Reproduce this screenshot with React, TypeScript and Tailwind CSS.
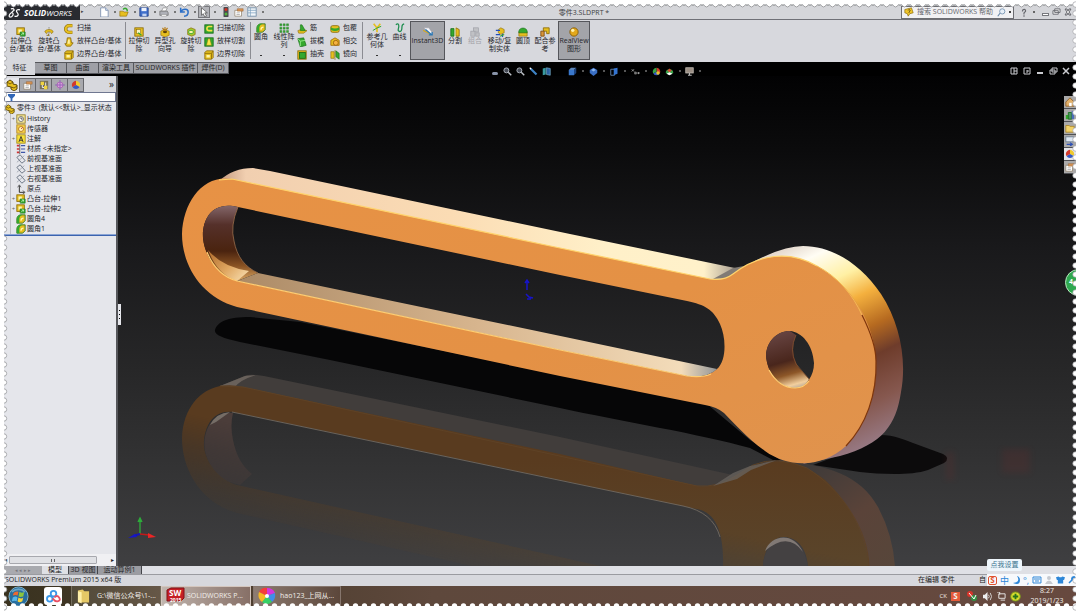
import React from "react";

type IconProps = { name: string; size?: "sm" | "md" | "lg" };

const Y = "#e6bf1f";
const YD = "#8a6a08";
const G = "#35a82e";
const GD = "#156b18";

const glyphs: Record<string, React.ReactNode> = {
  extrude: (<><rect x="1" y="1" width="9" height="8" fill={Y} stroke={YD} /><rect x="3" y="3" width="4" height="4" fill="#fbf4b4" /><path d="M5 6h6v5H5z" fill={G} stroke={GD} strokeWidth=".7" /><path d="M6 10l3-3M7 7h2v2" stroke="#d8ffd0" fill="none" strokeWidth=".8" /></>),
  revolve: (<><path d="M6 0v12" stroke="#888" strokeDasharray="2 1" /><path d="M1 6c0-4 10-4 10 0l-2 2c0-3-6-3-6 0z" fill={Y} stroke={YD} strokeWidth=".7" /><path d="M3 10h3l-1-2" stroke={YD} fill="none" /></>),
  sweep: (<><path d="M10 2H6a4 4 0 000 8h4" fill="none" stroke={YD} strokeWidth="4" /><path d="M10 2H6a4 4 0 000 8h4" fill="none" stroke={Y} strokeWidth="2.6" /></>),
  loft: (<><path d="M4 1h4l1 6h2l-3 4H3L1 8h2z" fill={Y} stroke={YD} /><path d="M5 3h2v5H4z" fill="#fff1a0" /></>),
  boundary: (<><path d="M1 3l2-2h8v8l-2 2H1z" fill={Y} stroke={YD} /><path d="M1 4h8v7M9 4l2-3" stroke={YD} fill="none" /><path d="M3 6h4v3H3z" fill="#fff4a8" /></>),
  cutExtrude: (<><rect x="1" y="1" width="10" height="10" fill={Y} stroke={YD} /><rect x="3" y="3" width="5" height="5" fill="#f8f3c4" stroke={YD} strokeWidth=".7" /><path d="M5 7l4 3" stroke={G} strokeWidth="1.5" /></>),
  hole: (<><path d="M1 5l4-2 6 2v5l-5 2-5-2z" fill={Y} stroke={YD} strokeWidth=".7" /><ellipse cx="6" cy="6" rx="2.5" ry="1.4" fill="#5b4208" /><path d="M6 0v5M3 1l2 3M9 1L7 4" stroke="#b57812" strokeWidth="1.3" /></>),
  cutRevolve: (<><path d="M2 3l4-2 5 2v6l-4 2-5-2z" fill="#a6c82e" stroke={YD} strokeWidth=".8" /><ellipse cx="6" cy="6" rx="3" ry="2" fill="#fff4a8" stroke={G} /></>),
  cutSweep: (<><rect x="1" y="1" width="10" height="10" fill={G} stroke={GD} /><path d="M10 3H6a2 2 0 000 5h4" stroke="#f3e04a" strokeWidth="2" fill="none" /></>),
  cutLoft: (<><rect x="1" y="1" width="10" height="10" fill={G} stroke={GD} /><path d="M5 2h2l2 8H3z" fill="#f8e64b" stroke={YD} strokeWidth=".5" /></>),
  fillet: (<><path d="M1 11V6a5 5 0 015-5h5v7l-3 3z" fill={Y} stroke={GD} strokeWidth=".9" /><path d="M1 6a5 5 0 015-5h2a6 6 0 00-4 6v4H1z" fill={G} /><path d="M6 8a3 3 0 013-3" stroke="#fff6a8" strokeWidth="1.6" fill="none" /></>),
  pattern: (<g fill={G} stroke={GD} strokeWidth=".4"><path d="M1 1h2.4v2.4H1zM5 1h2.4v2.4H5zM9 1h2.4v2.4H9zM1 5h2.4v2.4H1zM5 5h2.4v2.4H5zM9 5h2.4v2.4H9zM1 9h2.4v2.4H1zM5 9h2.4v2.4H5zM9 9h2.4v2.4H9z" /></g>),
  rib: (<><path d="M1 8l5-2 6 2-4 3H2z" fill={Y} stroke={YD} strokeWidth=".7" /><path d="M4 1h2l4 7H4z" fill={G} stroke={GD} strokeWidth=".6" /></>),
  draft: (<><path d="M1 2l7-1 3 9-7 2z" fill={G} stroke={GD} strokeWidth=".8" /><path d="M1 2l3 3 6-1M4 5v6" stroke="#9cf08f" fill="none" /></>),
  shell: (<><rect x="1" y="1" width="10" height="10" fill={Y} stroke={YD} /><rect x="3" y="3" width="7" height="7" fill={G} stroke={GD} /></>),
  wrap: (<><rect x="1" y="2" width="10" height="8" rx="2" fill={Y} stroke={YD} /><path d="M1 4c3 2 7 2 10 0v3c-3 2-7 2-10 0z" fill={G} /></>),
  intersect: (<><path d="M1 4l5-3 5 3v6H1z" fill={Y} stroke="#a56a08" /><circle cx="7" cy="7" r="3" fill="#f4b340" stroke="#9a5d09" /></>),
  mirror: (<><path d="M1 2h4v8H1z" fill={Y} stroke={YD} strokeWidth=".7" /><path d="M7 1l4 3v7l-4-3z" fill={G} stroke={GD} strokeWidth=".7" /><path d="M6 0v12" stroke={YD} strokeWidth=".7" /></>),
  refgeo: (<><path d="M2 1l4 5 4-5M6 6v5" stroke={Y} strokeWidth="2" fill="none" /><path d="M6 6l5-2M6 6L1 9" stroke={G} strokeWidth="1.2" /></>),
  curve: (<path d="M1 2c4-3 4 2 3 5s3 5 4 1S7 2 11 1" fill="none" stroke="#1f8e50" strokeWidth="1.5" />),
  instant: (<><path d="M1 1h6l5 7-3 2z" fill="#f4f4f8" stroke="#9a9aa3" strokeWidth=".6" /><path d="M0 4l8 4" stroke="#d1a72a" strokeWidth="1.5" /><path d="M3 3l7 6M7 9.500h4V6" stroke="#2e78b4" strokeWidth="1.6" fill="none" /></>),
  split: (<><path d="M1 2h4v9H1z" fill={G} stroke={GD} /><path d="M7 1l4 2v8H7z" fill={Y} stroke={YD} /><path d="M6 0v12" stroke="#f8f8c0" /></>),
  combine: (<g fill="#c0c1c5" stroke="#9d9ea5" strokeWidth=".8"><rect x="4" y="1" width="6" height="5" /><rect x="1" y="5" width="5" height="6" /><rect x="7" y="7" width="4" height="4" /></g>),
  move: (<><path d="M4 3l3-2 4 2v4l-4 2-3-2z" fill={Y} stroke={YD} strokeWidth=".7" /><path d="M1 4h5M1 9h5M9 8v4" stroke="#204fbd" strokeWidth="1.5" /><path d="M6 11l5-2" stroke={G} strokeWidth="1.4" /></>),
  dome: (<><path d="M1 6h10v5H1z" fill={Y} stroke={YD} strokeWidth=".7" /><path d="M1 7V5c1-5 9-5 10 0v2z" fill={G} stroke={GD} strokeWidth=".7" /></>),
  mate: (<><path d="M4 1h7v7H8V5H4z" fill={Y} stroke={YD} /><path d="M1 5h4v6H1z" fill="#d9963a" stroke="#7a4b0d" /></>),
  realview: (<><circle cx="6" cy="6" r="5" fill="#e2a81c" stroke="#7f5808" /><circle cx="4.5" cy="4" r="2" fill="#fff2b0" /></>),
  newdoc: (<><path d="M2 1h6l3 3v8H2z" fill="#fff" stroke="#7c8fae" /><path d="M8 1v3h3" fill="#d8e3f3" stroke="#7c8fae" /></>),
  open: (<><path d="M1 5h4l1 1h5l-2 5H1z" fill={Y} stroke={YD} strokeWidth=".7" /><path d="M5 3c2-3 5-1 5 2" stroke={G} strokeWidth="1.8" fill="none" /></>),
  save: (<><path d="M1 1h10v10H1z" fill="#3f6fcb" stroke="#1f3f86" /><path d="M3 1h6v4H3z" fill="#eef2fb" /><path d="M4 8h5v3H4z" fill="#c3d3f0" /></>),
  print: (<><path d="M3 5l2-4h5L8 5z" fill="#fff" stroke="#777" strokeWidth=".7" /><path d="M1 5h9l1 2v3H1z" fill="#aeb0b7" stroke="#666" strokeWidth=".8" /><path d="M3 9h6v2H3z" fill="#fff" stroke="#777" strokeWidth=".5" /></>),
  undo: (<path d="M2 1v5h5M2 6c3-5 9-4 9 0 0 3-2 5-5 5" fill="none" stroke="#2c6fc7" strokeWidth="1.8" />),
  pointer: (<path d="M3 1v9l2-2 2 4 2-1-2-4h3z" fill="#fff" stroke="#444" strokeWidth=".8" />),
  traffic: (<><rect x="3" y="0" width="6" height="12" rx="1" fill="#4a4b50" /><circle cx="6" cy="3" r="1.8" fill="#d33224" /><circle cx="6" cy="8.5" r="1.8" fill="#53b23f" /></>),
  props: (<><path d="M1 4h8v7H1z" fill="#fff" stroke="#8a7a60" strokeWidth=".8" /><path d="M4 2h7v3H4z" fill="#d79455" stroke="#8a5a2b" strokeWidth=".5" /><path d="M3 7h4M3 9h4" stroke="#888" strokeWidth=".7" /></>),
  list: (<><rect x="1" y="1" width="10" height="10" fill="#f2f6fa" stroke="#6d8aa5" /><path d="M1 4h10M1 7h10M4 1v10" stroke="#7da0bf" strokeWidth=".9" /></>),
  part: (<><path d="M1 3l3-2 3 2v2l4 1v4l-3 2-3-2V8L1 7z" fill={Y} stroke="#5f4a06" strokeWidth="1" /><path d="M1 3l3 2 3-2M5 8l3 1 3-2" stroke="#5f4a06" strokeWidth=".8" fill="none" /></>),
  config: (<><rect x="1" y="1" width="10" height="10" fill="#77705a" /><path d="M2 2h4v4H2zM6 7h4v4H6z" fill="#f0d340" /><path d="M4 6v3h2M8 3v4" stroke="#fff" fill="none" /></>),
  target: (<><circle cx="6" cy="6" r="3.6" fill="#da9fda" stroke="#a960b5" /><path d="M6 0v12M0 6h12" stroke="#8c5fb6" /></>),
  ball: (<><path d="M6 6V1a5 5 0 014.3 7.5z" fill="#f0ca2d" /><path d="M6 6l4.3 2.5a5 5 0 01-8.6 0z" fill="#3459c6" /><path d="M6 6L1.7 8.5A5 5 0 016 1z" fill="#d43a2b" /></>),
  colors: (<><path d="M6 6V1a5 5 0 014.3 7.5z" fill="#d43a2b" /><path d="M6 6l4.3 2.5a5 5 0 01-8.6 0z" fill="#3459c6" /><path d="M6 6L1.7 8.5A5 5 0 016 1z" fill="#38a344" /><circle cx="8" cy="8" r="2.3" fill="#e8c32d" /></>),
  scene: (<><path d="M1 8a5 5 0 0110 0l-5 3z" fill="#3aa54a" /><path d="M3 5l3-3 3 3-3 2z" fill="#d34d32" /><path d="M2 9l4-2 4 2-4 2z" fill="#fff" /></>),
  history: (<><rect x="1" y="1" width="10" height="10" fill="#f3e69a" stroke="#927b22" /><circle cx="6" cy="6" r="3" fill="#fff" stroke="#666" /><path d="M6 4v2h2" stroke="#333" fill="none" /></>),
  sensor: (<><rect x="1" y="1" width="10" height="10" fill="#f7d34c" stroke="#b0831c" /><circle cx="6" cy="6" r="3" fill="#fff3ba" stroke="#b06d16" /><path d="M6 6l2-2" stroke="#b33" /></>),
  note: (<><rect x="1" y="1" width="10" height="10" fill="#f7e03b" stroke="#a28812" /><path d="M3.5 9.500L6 3l2.500 6.500M4.500 7.500h3" stroke="#333" fill="none" strokeWidth="1.1" /></>),
  material: (<><path d="M1 2h3M1 6h3M1 10h3" stroke="#c33" strokeWidth="2" /><path d="M6 2h5M6 6h5M6 10h5" stroke="#3c55a8" strokeWidth="1.4" /><path d="M4.500 0v12" stroke="#333" strokeWidth=".8" /></>),
  plane: (<><path d="M1 4l4-3 6 7-4 3z" fill="none" stroke="#5f6a7a" /><path d="M1 10L10 2" stroke="#7f8896" strokeWidth=".7" /></>),
  origin: (<><path d="M4 2v8h6" stroke="#333" fill="none" strokeWidth="1.2" /><path d="M2 4l2-3 2 3M8 8l3 2-3 2" stroke="#333" fill="none" strokeWidth=".8" /></>),
  zoom: (<><circle cx="4.500" cy="4.500" r="3.300" fill="#454a55" stroke="#b7bcc6" strokeWidth="1.200" /><path d="M7 7l4 4" stroke="#c0c4cb" strokeWidth="1.800" /></>),
  pen: (<><path d="M1 1l3 1 7 7-2 2-7-7z" fill="#3e83c7" /><path d="M1 1l2 2" stroke="#fff" strokeWidth="1.500" /></>),
  section: (<><path d="M1 2l4-1v9l-4 1z" fill="#3a9aa0" /><path d="M6 1l5 1v9l-5-1z" fill="#2c62a4" stroke="#83bfd8" strokeWidth=".8" /></>),
  cube: (<><path d="M1 4h7v7H1z" fill="#3a78cc" /><path d="M1 4l3-3h7L8 4z" fill="#5c86ba" /><path d="M8 4l3-3v7l-3 3z" fill="#1c437f" /></>),
  sphere: (<><path d="M6 1l5 3v4l-5 4-5-4V4z" fill="#3a6fc4" /><path d="M3 4l3-2 3 2-3 2z" fill="#8fb7ea" /></>),
  hide: (<><path d="M1 3h5v8H1z" fill="none" stroke="#79a0cf" /><path d="M5 2l5-1v8l-5 2z" fill="#3474d0" /></>),
  glasses: (<><path d="M1 3l3 3M4 3L1 6" stroke="#bbb" /><circle cx="6" cy="8" r="2" fill="#777" /><circle cx="10" cy="8" r="1.500" fill="#999" /></>),
  monitor: (<><rect x="1" y="1" width="10" height="7" fill="#9b8f84" stroke="#c5beb6" /><path d="M4 11h5M6 8v3" stroke="#bbb" strokeWidth="1.500" /></>),
  home: (<><path d="M1 6l5-5 5 5v5H1z" fill="#e2b069" stroke="#8a5a24" /><path d="M5 7h3v4H5z" fill="#fff" /></>),
  library: (<><path d="M1 6h3v5H1z" fill={G} /><path d="M4 3h4v8H4z" fill="#4d9560" stroke={GD} /><path d="M8 1h3v10H8z" fill="#4d6db8" /></>),
  folder: (<path d="M1 3h4l1 1h5v7H1z" fill="#f2d26a" stroke="#a98425" />),
  palette: (<><rect x="1" y="1" width="9" height="6" fill="#dfe8f3" stroke="#66778c" /><path d="M2 10h7M6 8l3 2-3 2" stroke="#2d50b5" fill="none" strokeWidth="1.300" /></>),
};

function Icon({ name, size = "md" }: IconProps) {
  const cls = size === "sm" ? "size-[9px]" : size === "lg" ? "size-[12px]" : "size-[10px]";
  return (
    <svg viewBox="0 0 12 12" className={cls + " shrink-0"} aria-hidden="true">
      {glyphs[name]}
    </svg>
  );
}

type BigProps = { icon: string; lines: string[]; width: string; high?: boolean; pressed?: boolean; disabled?: boolean };

function BigButton({ icon, lines, width, high, pressed, disabled }: BigProps) {
  return (
    <button
      type="button"
      disabled={disabled}
      className={
        width +
        " flex shrink-0 flex-col items-center whitespace-nowrap text-[7px] leading-[8px] " +
        (high ? "pt-[3px] " : pressed ? "pt-[5px] " : "pt-[7px] ") +
        (pressed ? "border border-[#55565b] bg-[#a3a4a9] " : "") +
        (disabled ? "text-[#a2a3a8]" : "text-[#25262b]")
      }
    >
      <Icon name={icon} />
      {lines.map((l) => (
        <span key={l}>{l}</span>
      ))}
      {high && <span className="mt-auto mb-[5px] h-px w-[2px] bg-[#333]" />}
    </button>
  );
}

function SmallColumn({ items, width }: { items: [string, string][]; width: string }) {
  return (
    <div className={width + " flex shrink-0 flex-col pt-[2px]"}>
      {items.map(([icon, label]) => (
        <button key={label} type="button" className="flex h-[13px] items-center gap-[3px] whitespace-nowrap text-[7px] text-[#25262b]">
          <Icon name={icon} />
          {label}
        </button>
      ))}
    </div>
  );
}

const Divider = () => <span className="mt-[2px] h-[37px] w-px shrink-0 bg-[#8b8c92]" />;

function QuickButton({ name, menu, active }: { name: string; menu?: boolean; active?: boolean }) {
  return (
    <button type="button" aria-label={name} className={"flex items-center " + (menu ? "w-5 gap-[5px]" : "w-[13px]")}>
      <span className={active ? "bg-[#b3b4b9] outline outline-[#77787d]" : ""}>
        <Icon name={name} />
      </span>
      {menu && <span className="size-[2px] bg-[#777]" />}
    </button>
  );
}

function TitleBar() {
  return (
    <header className="flex h-4 shrink-0 items-center border-b border-[#707177] bg-[#d5d6da] pt-px text-[7px]">
      <div className="-mt-px flex h-4 w-[76px] shrink-0 items-center bg-[#292b30] pt-[2px] pl-[4px] text-white">
        <svg viewBox="0 0 14 11" className="mr-[3px] h-[10px] w-[13px]" aria-hidden="true">
          <path d="M3 1c4-1 5 2 1 3M4 5c-2 1-4 4-2 5 3 0 5-4 2-5M13 2c-3-1-5 1-3 3s1 5-3 4" fill="none" stroke="#fff" strokeWidth="1.300" />
        </svg>
        <span className="text-[8px] font-bold italic">
          SOLID<span className="font-normal">WORKS</span>
        </span>
      </div>
      <span className="w-[19px] pl-[1px] text-[5px] text-[#444]">▸</span>
      <div className="flex shrink-0">
        <QuickButton name="newdoc" menu />
        <QuickButton name="open" menu />
        <QuickButton name="save" menu />
        <QuickButton name="print" menu />
        <QuickButton name="undo" menu />
        <QuickButton name="pointer" menu active />
        <span className="w-[2px]" />
        <QuickButton name="traffic" />
        <QuickButton name="props" />
        <QuickButton name="list" menu />
      </div>
      <h1 className="flex-1 pt-[2px] text-center text-[7px] text-[#3c3d42]">零件3.SLDPRT *</h1>
      <div className="flex shrink-0 items-center gap-[7px] self-stretch">
        <label className="flex h-[13px] w-[113px] items-center gap-[3px] border border-[#6c6d72] bg-[#f1f1f3] px-[2px]">
          <svg viewBox="0 0 12 12" className="size-[10px] shrink-0" aria-hidden="true">
            <path d="M1 3l8-2 2 6-4 1-2 3-1-3-3-1z" fill="#f0c62b" stroke="#8a6a08" strokeWidth=".8" />
            <path d="M5 4c1-2 4 0 1 2v1" stroke="#493704" fill="none" />
          </svg>
          <input aria-label="搜索 SOLIDWORKS 帮助" placeholder="搜索 SOLIDWORKS 帮助" className="w-0 min-w-0 flex-1 bg-transparent text-[7px] outline-none placeholder:text-[#66676d]" />
          <svg viewBox="0 0 12 12" className="size-[9px]" aria-hidden="true">
            <circle cx="7" cy="4.500" r="3.500" fill="#e8f0f8" stroke="#6384a5" />
            <path d="M4 7l-3 4" stroke="#6384a5" strokeWidth="1.500" />
          </svg>
          <span className="size-[2px] bg-[#444]" />
        </label>
        <button type="button" aria-label="帮助" className="flex w-[14px] items-center justify-between">
          <svg viewBox="0 0 8 11" className="h-[9px] w-[6px]" aria-hidden="true"><path d="M2 4c0-4 5-3 4 0L4 6v2M4 9v2" fill="none" stroke="#66676d" strokeWidth="1.600" /></svg>
          <span className="size-[2px] bg-[#666]" />
        </button>
        <div className="flex w-[34px] items-center gap-[3px]">
          <button type="button" aria-label="最小化" className="mt-[4px] h-[3px] w-[7px] border border-[#77787d] bg-white" />
          <button type="button" aria-label="还原">
            <svg viewBox="0 0 10 9" className="h-[8px] w-[9px]" fill="#eee" stroke="#66676d"><path d="M3 1h6v4H3zM1 3h6v4H1z" /></svg>
          </button>
          <button type="button" aria-label="关闭">
            <svg viewBox="0 0 8 8" className="size-[8px]" fill="#eee" stroke="#66676d"><path d="M1 1h2l1 2 1-2h2L5 4l2 3H5L4 5 3 7H1l2-3z" /></svg>
          </button>
        </div>
      </div>
    </header>
  );
}

function Ribbon() {
  return (
    <div className="flex h-[42px] shrink-0 overflow-hidden bg-[#d7d8dd] pb-px pl-[3px]">
      <BigButton icon="extrude" lines={["拉伸凸", "台/基体"]} width="w-7" />
      <BigButton icon="revolve" lines={["旋转凸", "台/基体"]} width="w-7" />
      <SmallColumn width="w-[62px] pl-[1px]" items={[["sweep", "扫描"], ["loft", "放样凸台/基体"], ["boundary", "边界凸台/基体"]]} />
      <Divider />
      <BigButton icon="cutExtrude" lines={["拉伸切", "除"]} width="w-[26px]" />
      <BigButton icon="hole" lines={["异型孔", "向导"]} width="w-[26px]" />
      <BigButton icon="cutRevolve" lines={["旋转切", "除"]} width="w-[26px]" />
      <SmallColumn width="w-[46px]" items={[["cutSweep", "扫描切除"], ["cutLoft", "放样切割"], ["boundary", "边界切除"]]} />
      <Divider />
      <BigButton icon="fillet" lines={["圆角"]} width="w-5" high />
      <BigButton icon="pattern" lines={["线性阵", "列"]} width="w-[26px]" high />
      <SmallColumn width="w-[33px]" items={[["rib", "筋"], ["draft", "拔模"], ["shell", "抽壳"]]} />
      <SmallColumn width="w-[32px]" items={[["wrap", "包覆"], ["intersect", "相交"], ["mirror", "镜向"]]} />
      <Divider />
      <BigButton icon="refgeo" lines={["参考几", "何体"]} width="w-7" high />
      <BigButton icon="curve" lines={["曲线"]} width="w-[17px]" high />
      <span className="w-[2px] shrink-0" />
      <div className="flex shrink-0 py-px">
        <BigButton icon="instant" lines={["Instant3D"]} width="w-[35px]" pressed />
      </div>
      <BigButton icon="split" lines={["分割"]} width="w-5" />
      <BigButton icon="combine" lines={["组合"]} width="w-5" disabled />
      <BigButton icon="move" lines={["移动/复", "制实体"]} width="w-[29px]" />
      <BigButton icon="dome" lines={["圆顶"]} width="w-[18px]" />
      <BigButton icon="mate" lines={["配合参", "考"]} width="w-[26px]" />
      <div className="flex shrink-0 py-px">
        <BigButton icon="realview" lines={["RealView", "图形"]} width="w-8" pressed />
      </div>
    </div>
  );
}

function TabStrip() {
  const tabs: [string, string][] = [["草图", "w-8"], ["曲面", "w-8"], ["渲染工具", "w-[35px]"], ["SOLIDWORKS 插件", "w-[64px]"], ["焊件(D)", "w-[31px]"]];
  return (
    <div className="flex h-[14px] shrink-0 items-start overflow-hidden bg-black text-[7px]">
      <div role="tablist" className="flex h-[13px] shrink-0">
        <button role="tab" aria-selected="true" className="w-[31px] bg-[#d7d8dd] text-[#25262b]">特征</button>
        {tabs.map(([t, w]) => (
          <button key={t} role="tab" aria-selected="false" className={w + " h-[12px] whitespace-nowrap border border-l-0 border-[#56575c] bg-[#9fa0a6] text-[#1e1f24]"}>{t}</button>
        ))}
      </div>
      <div className="flex flex-1 items-center justify-between self-stretch pt-[4px] pr-[6px] pl-[263px]">
        <div className="flex items-center text-[#888]">
          <span className="mt-[5px] mr-[5px] h-[3px] w-[6px] rounded-full bg-[#8893a8]" />
          <div className="flex w-[65px] gap-[4px]">
            <Icon name="zoom" size="sm" /><Icon name="zoom" size="sm" /><Icon name="pen" size="sm" /><Icon name="section" size="sm" />
          </div>
          {["cube", "sphere", "hide", "glasses"].map((n) => (
            <button key={n} type="button" aria-label={n} className="flex w-[21px] items-center gap-[5px]"><Icon name={n} size="sm" /><span className="size-[2px] bg-[#555]" /></button>
          ))}
          <Icon name="colors" size="sm" />
          <button type="button" aria-label="scene" className="ml-[4px] flex w-5 items-center gap-[5px]"><Icon name="scene" size="sm" /><span className="size-[2px] bg-[#555]" /></button>
          <button type="button" aria-label="monitor" className="flex items-center gap-[5px]"><Icon name="monitor" size="sm" /><span className="size-[2px] bg-[#555]" /></button>
        </div>
        <svg viewBox="0 0 60 8" className="h-[8px] w-[60px]" fill="none" stroke="#c9cacf" aria-hidden="true">
          <path d="M1 1h6v6H1zM14 1h6v6h-6zM4 1v6M4 4h3M17 3v3M17 4h2" />
          <path d="M27 6h6" strokeWidth="2" />
          <path d="M42 1h5v4h-5zM40 3h5v4h-5z" />
          <path d="M53 1l6 6M59 1l-6 6" strokeWidth="1.500" />
        </svg>
      </div>
    </div>
  );
}

const tree: [string, string, boolean][] = [
  ["history", "History", true],
  ["sensor", "传感器", false],
  ["note", "注解", true],
  ["material", "材质 <未指定>", false],
  ["plane", "前视基准面", false],
  ["plane", "上视基准面", false],
  ["plane", "右视基准面", false],
  ["origin", "原点", false],
  ["extrude", "凸台-拉伸1", true],
  ["extrude", "凸台-拉伸2", true],
  ["fillet", "圆角4", false],
  ["fillet", "圆角1", false],
];

function FeaturePanel() {
  return (
    <aside className="flex w-[112px] shrink-0 flex-col overflow-hidden bg-[#e5e6eb] text-[7px] text-[#222328]">
      <div className="flex h-4 shrink-0 items-end bg-[#d7d8dd]">
        {["part", "props", "config", "target", "ball"].map((n, i) => (
          <button key={n} type="button" aria-label={n} className={"flex h-[14px] w-4 items-center justify-center border-r border-[#66676c] " + (i === 0 ? "bg-[#e5e6eb]" : "border-y bg-[#a8a9ae]")}>
            <Icon name={n} size={i === 0 ? "lg" : "md"} />
          </button>
        ))}
        <span className="ml-auto pr-[2px] text-[10px] leading-[15px]">»</span>
      </div>
      <label className="flex h-[10px] shrink-0 items-center border border-[#6f7790] bg-white pl-[3px]">
        <svg viewBox="0 0 8 8" className="size-[7px]" aria-hidden="true"><path d="M0 0h8v2L5 5v3H3V5L0 2z" fill="#3267b8" /></svg>
        <input aria-label="过滤器" className="h-full min-w-0 flex-1 bg-transparent pl-1 text-[7px] outline-none" />
      </label>
      <div className="flex h-[12px] shrink-0 items-center gap-[2px] whitespace-pre pt-px pl-px">
        <Icon name="part" />
        零件3  (默认&lt;&lt;默认&gt;_显示状态
      </div>
      <ul className="ml-[6px] border-l border-[#bfc0c6]">
        {tree.map(([icon, label, more]) => (
          <li key={label} className="flex h-[10px] items-center whitespace-nowrap">
            <span className="w-[5px] text-center text-[6px] leading-none text-[#666]">{more ? "+" : ""}</span>
            <span className="mr-[1px] flex"><Icon name={icon} /></span>
            {label}
          </li>
        ))}
      </ul>
      <div className="h-[2px] shrink-0 border-b border-[#3b63ae] bg-[#8aa4d4]" />
      <div className="mt-auto flex h-[12px] items-center gap-[2px] bg-[#f0f0f3] pr-[2px] text-[6px]">
        <span>◂</span>
        <div className="flex h-[8px] w-[88px] items-center justify-center rounded-[1px] border border-[#a7a8ae] bg-[#e0e1e5] text-[#555]">
          <span className="h-[3px] w-[4px] border-x border-[#666]" />
        </div>
        <span className="ml-auto">▸</span>
      </div>
    </aside>
  );
}

function ModelView() {
  return (
    <svg viewBox="118 76 958 490" preserveAspectRatio="xMidYMid slice" className="block size-full" role="img" aria-label="零件3">
      <defs>
        <linearGradient id="bg" x1="0" y1="0" x2="0" y2="1">
          <stop offset="0" stopColor="#020203" />
          <stop offset=".15" stopColor="#0b0b0c" />
          <stop offset=".35" stopColor="#19191b" />
          <stop offset=".6" stopColor="#272728" />
          <stop offset=".8" stopColor="#333334" />
          <stop offset="1" stopColor="#3f3f41" />
        </linearGradient>
        <linearGradient id="face" x1="0" y1="0" x2="1" y2="1">
          <stop offset="0" stopColor="#e79245" />
          <stop offset=".55" stopColor="#e49145" />
          <stop offset="1" stopColor="#e0934d" />
        </linearGradient>
        <linearGradient id="top" x1="220" y1="0" x2="735" y2="0" gradientUnits="userSpaceOnUse">
          <stop offset="0" stopColor="#c49a80" />
          <stop offset=".05" stopColor="#f1cfb0" />
          <stop offset=".45" stopColor="#fbdcb4" />
          <stop offset=".75" stopColor="#fff0c9" />
          <stop offset=".94" stopColor="#fff1ca" />
          <stop offset="1" stopColor="#aaa092" />
        </linearGradient>
        <linearGradient id="floor" x1="237" y1="0" x2="720" y2="0" gradientUnits="userSpaceOnUse">
          <stop offset="0" stopColor="#ab8a66" />
          <stop offset=".5" stopColor="#d7b58e" />
          <stop offset=".92" stopColor="#f3dcba" />
          <stop offset="1" stopColor="#8b9095" />
        </linearGradient>
        <linearGradient id="rim" x1="770" y1="246" x2="870" y2="455" gradientUnits="userSpaceOnUse">
          <stop offset="0" stopColor="#d9c8bc" />
          <stop offset=".12" stopColor="#fffdf4" />
          <stop offset=".25" stopColor="#fff0a4" />
          <stop offset=".36" stopColor="#f4b03e" />
          <stop offset=".5" stopColor="#b66a20" />
          <stop offset=".62" stopColor="#6e3c2b" />
          <stop offset=".8" stopColor="#86584f" />
          <stop offset="1" stopColor="#9b8190" />
        </linearGradient>
        <linearGradient id="wall" x1="0" y1="206" x2="0" y2="281" gradientUnits="userSpaceOnUse">
          <stop offset="0" stopColor="#826568" />
          <stop offset=".25" stopColor="#55302a" />
          <stop offset=".6" stopColor="#4a230f" />
          <stop offset=".8" stopColor="#8a5323" />
          <stop offset="1" stopColor="#d9a765" />
        </linearGradient>
        <linearGradient id="lip" x1="208" y1="250" x2="240" y2="281" gradientUnits="userSpaceOnUse">
          <stop offset="0" stopColor="#b06a2a" />
          <stop offset=".6" stopColor="#dfa660" />
          <stop offset="1" stopColor="#f3d3a0" />
        </linearGradient>
        <linearGradient id="bore" x1="780" y1="331" x2="797" y2="390" gradientUnits="userSpaceOnUse">
          <stop offset="0" stopColor="#684543" />
          <stop offset=".5" stopColor="#49261c" />
          <stop offset=".72" stopColor="#8d5728" />
          <stop offset=".9" stopColor="#f2cf9e" />
          <stop offset="1" stopColor="#aaa29a" />
        </linearGradient>
        <linearGradient id="mirrorFade" x1="243" y1="387" x2="216" y2="509" gradientUnits="userSpaceOnUse">
          <stop offset="0" stopColor="#fff" />
          <stop offset=".3" stopColor="#fff" />
          <stop offset=".55" stopColor="#999" />
          <stop offset=".78" stopColor="#555" />
          <stop offset="1" stopColor="#222" />
        </linearGradient>
        <mask id="mirrorMask" maskUnits="userSpaceOnUse" x="118" y="360" width="958" height="210">
          <rect x="118" y="360" width="958" height="210" fill="url(#mirrorFade)" />
        </mask>
        <linearGradient id="mirrorFace" x1="0" y1="460" x2="0" y2="567" gradientUnits="userSpaceOnUse">
          <stop offset="0" stopColor="#593b1f" />
          <stop offset="1" stopColor="#5a452b" />
        </linearGradient>
        <linearGradient id="mirrorRim" x1="815" y1="465" x2="895" y2="567" gradientUnits="userSpaceOnUse">
          <stop offset="0" stopColor="#403b39" />
          <stop offset=".5" stopColor="#5a4339" />
          <stop offset="1" stopColor="#57463a" />
        </linearGradient>
        <filter id="soft"><feGaussianBlur stdDeviation="3" /></filter>
      </defs>
      <rect x="118" y="76" width="958" height="490" fill="url(#bg)" />

      <path d="M215 330C218 321 228 317 250 317L300 322L707 404L750 440L785 463L773 460L750 448C700 434 620 421 560 408L330 360L240 342C222 338 214 335 215 330Z" fill="#060607" />
      <path d="M813 465L853 450L880 435C895 435 905 440 913 443L943 454Q951 458 944 463L928 470C910 476 880 474 860 472Z" fill="#0c0b0c" />

      <path d="M220 386L247 375Q253 374 264 376L560 437L733 475L713 487L697 487L243 389Z" fill="#413d3b" />
      <path d="M220 386L245 376L256 375Q240 380 235 387Z" fill="#69615b" />
      <path d="M760 463L780 460C830 466 860 475 878 507Q893 535 895 567H860L800 480Z" fill="url(#mirrorRim)" />
      <g mask="url(#mirrorMask)">
        <path d="M233 413Q230 425 233 440C236 455 242 466 252 474L240 485L222 480C205 463 203 447 205 437C208 422 218 411 233 413Z" fill="#4b3d3a" />
        <path fillRule="evenodd" d="M220 386Q232 384 243 387L560 454L697 486Q715 489 737 475C765 456 795 456 825 480C850 502 867 538 869 567H808C807 547 796 537 783 537C771 538 764 550 763 567L600 595L237 513C201 503 182 470 182 438C183 408 200 390 220 386ZM233 412C211 409 203 430 204 447C206 463 219 480 237 485L560 557L640 575L723 567C724 540 719 516 701 510L683 506L560 480Z" fill="url(#mirrorFace)" />
      </g>
      <path d="M210 425Q216 413 230 412L216 422Z" fill="#756d66" />
      <path d="M232 412L683 506Q713 512 720 537" fill="none" stroke="#797066" strokeWidth=".8" />
      <path d="M220 386L243 387L697 486Q718 488 737 475L753 465Q777 455 807 468C843 491 868 530 869 567" fill="none" stroke="#5e4226" strokeWidth="1" />
      <path d="M763 567C763 537 800 520 808 567" fill="#444142" />
      <path d="M765 551C771 535 793 531 803 552Q788 531 765 551Z" fill="#817975" />
      <path d="M713 486L733 473L750 466L777 460L751 470L737 479Z" fill="#67615c" opacity=".8" />

      <path d="M219 181Q233 168 253 168L270 171L570 234L735 268L730 284L710 284L570 256L230 184Z" fill="url(#top)" />
      <path d="M713 279L733 268L744 266L728 278Z" fill="#817b75" />
      <path d="M755 261Q784 246 803 246C832 246 861 264 881 294C900 323 907 360 901 392C896 425 883 444 840 456L803 464L824 440L824 290L760 270Z" fill="url(#rim)" />
      <path fillRule="evenodd" fill="url(#face)" d="M232 179L560 248L710 279Q724 281 733 274C758 254 790 250 817 266C853 286 874 323 876 361C877 395 866 425 846 446C823 467 790 469 765 451C747 438 734 423 724 413Q717 407 705 405L560 376L237 307C201 297 182 265 182 234C183 202 203 174 232 179ZM233 206C211 203 202 220 203 238C205 258 219 276 237 281L560 350L687 376Q706 379 717 369C727 360 726 337 720 324C713 309 705 305 687 301L560 275L238 207ZM790 331C777 331 767 341 766 355C767 374 780 388 795 388C807 386 814 376 814 363C813 345 802 332 790 331Z" />
      <path d="M233 206L238 207Q230 226 234 241C237 257 245 267 258 273L237 281C219 276 205 258 203 238C202 220 211 203 233 206Z" fill="url(#wall)" />
      <path d="M208 250Q222 267 249 271L237 281Q217 274 208 250Z" fill="url(#lip)" />
      <path d="M237 281L258 273L570 338L717 369Q708 378 687 376L560 350Z" fill="url(#floor)" />
      <path d="M790 331L796 335Q789 353 799 368L809 379C806 385 801 388 795 388C780 388 767 374 766 355C767 341 777 331 790 331Z" fill="url(#bore)" />
      <path d="M796 335Q789 350 796 364L809 379" fill="none" stroke="#83512e" strokeWidth=".8" />
      <path d="M238 207Q230 226 234 241C237 257 245 267 258 273" fill="none" stroke="#9c6f4b" strokeWidth=".8" />
      <path d="M219 180L232 179L560 248L710 279Q724 281 733 274C758 254 790 250 817 266" fill="none" stroke="#ffd36c" strokeWidth="1.200" />
      <path d="M817 266C838 277 853 295 862 315" fill="none" stroke="#f5ba51" strokeWidth="1" />
      <path d="M862 315C872 335 876 350 876 361C877 395 866 425 846 446" fill="none" stroke="#7e360c" strokeWidth="1.200" />
      <path d="M207 252Q216 275 237 281L560 350L687 376Q702 378 711 374M769 370Q779 388 795 388Q804 388 809 381" fill="none" stroke="#ffcd72" strokeWidth="1.200" />

      <path d="M527 281v9m-2-7l2-3 2 3M526 294l3 3 4 1M527 299h4" fill="none" stroke="#1714c9" strokeWidth="1.500" />
      <path d="M140 534V520M138 522l2-4 2 4" stroke="#2eac3b" strokeWidth="1.300" fill="#2eac3b" />
      <path d="M140 534l-7 2" stroke="#1616b9" strokeWidth="2" />
      <path d="M128 538l7-4 2 3z" fill="#1616c9" />
      <path d="M140 534l9 1" stroke="#c21919" strokeWidth="1.500" />
      <path d="M148 533l8 4-8 1z" fill="#ed2525" />
      <g fill="#7d2525" opacity=".16" filter="url(#soft)">
        <path d="M946 452h8v28h-8zM1002 449h28v24h-28z" />
      </g>
    </svg>
  );
}

function Viewport() {
  return (
    <main className="relative min-w-0 flex-1 overflow-hidden">
      <ModelView />
      <div className="absolute top-[228px] left-0 flex h-[21px] w-[3px] flex-col items-center justify-center gap-[3px] bg-[#e5e6eb]">
        <i className="size-px bg-black" /><i className="size-px bg-black" /><i className="size-px bg-black" />
      </div>
      <div className="absolute top-5 right-0 flex w-[12px] flex-col">
        {["home", "library", "folder", "palette", "ball", "props"].map((n) => (
          <button key={n} type="button" aria-label={n} className={"flex h-[13px] w-[13px] items-center border-b border-[#4f5054] pl-px " + (n === "ball" ? "bg-[#e5e6eb]" : "bg-[#aaa9a9]")}>
            <Icon name={n} />
          </button>
        ))}
      </div>
      <div className="absolute top-[193px] -right-[16px] flex size-[27px] items-center rounded-full border border-[#b7e8be] bg-[#2fa84f] pl-[3px] text-[7px] font-bold text-white">4</div>
    </main>
  );
}

function Taskbar() {
  return (
    <nav className="flex h-5 shrink-0 items-center overflow-hidden bg-linear-to-r from-[#39321f] via-[#5e483c] via-40% to-[#67493f] text-[7px] text-[#f2eeea]">
      <button type="button" aria-label="开始" className="ml-[4px] shrink-0">
        <svg viewBox="0 0 22 22" className="size-[21px]" aria-hidden="true">
          <circle cx="11" cy="11" r="10" fill="#286e9e" stroke="#83b5cd" />
          <path d="M4 6q7-5 14 0" stroke="#92c8df" strokeWidth="2" fill="none" opacity=".6" />
          <path d="M6 7q3-2 5-1l-1 4q-2-1-5 0z" fill="#ed6a30" />
          <path d="M12 6q3 2 5 0l-1 5q-3 1-5 0z" fill="#8cc63d" />
          <path d="M5 12q3-2 5 0l-1 4q-2-1-5 0z" fill="#57b6ea" />
          <path d="M11 12q3 2 5 0l-1 4q-3 2-5 0z" fill="#f7d43b" />
        </svg>
      </button>
      <button type="button" aria-label="网盘" className="ml-[15px] flex size-[18px] shrink-0 items-center justify-center rounded-[3px] bg-white">
        <svg viewBox="0 0 16 14" className="h-[13px] w-[15px]" fill="none" strokeWidth="2" aria-hidden="true">
          <circle cx="8" cy="4" r="3" stroke="#3b98e8" />
          <circle cx="4" cy="9.500" r="3" stroke="#3b98e8" />
          <path d="M9 8q3-3 5 0t-1 4-6-3" stroke="#e95065" />
        </svg>
      </button>
      <button type="button" className="ml-[9px] flex h-full w-[90px] shrink-0 items-center gap-[7px] border-x border-[#756e5e] bg-linear-to-r from-[#514a39] to-[#665747] pl-[5px]">
        <svg viewBox="0 0 14 16" className="h-[16px] w-[13px]" aria-hidden="true"><path d="M1 2l5-1 2 2h5v12H1z" fill="#e5c866" /><path d="M1 3l4 1v12l-4-2z" fill="#fff0a8" /></svg>
        G:\微信公众号\1-...
      </button>
      <button type="button" className="flex h-full w-[90px] shrink-0 items-center gap-[2px] border border-[#d4c6bd] bg-linear-to-r from-[#c1b6af] to-[#877067] pl-[4px] whitespace-nowrap">
        <svg viewBox="0 0 19 18" className="h-[18px] w-[19px] shrink-0" aria-hidden="true">
          <path d="M1 3l4-2h13v10l-3 3H1z" fill="#c51f25" stroke="#811318" />
          <text x="3" y="9" fontSize="8" fontWeight="700" fill="#fff">SW</text>
          <text x="4" y="15" fontSize="5" fontWeight="700" fill="#fff">2015</text>
        </svg>
        SOLIDWORKS P...
      </button>
      <button type="button" className="ml-[2px] flex h-full w-[88px] shrink-0 items-center gap-[4px] border border-[#86766d] bg-linear-to-r from-[#8d7c72] to-[#5c473b] pl-[4px]">
        <svg viewBox="0 0 18 18" className="size-[18px]" aria-hidden="true">
          <path d="M9 9L1 5q3-5 8-4z" fill="#f43e3b" />
          <path d="M9 9V1q6 0 8 5z" fill="#d536dc" />
          <path d="M9 9l8-3q1 6-3 9z" fill="#418eea" />
          <path d="M9 9l5 6q-5 4-10 0z" fill="#36d166" />
          <path d="M9 9l-5 6Q-1 11 1 5z" fill="#f6b925" />
          <circle cx="9" cy="9" r="2" fill="#fff" />
        </svg>
        hao123_上网从...
      </button>
      <div className="ml-auto flex shrink-0 items-center gap-[4px] pr-[9px]">
        <span className="text-[6px]">CK</span>
        <span className="flex size-[9px] items-center justify-center bg-[#e55b3a] text-[8px] leading-none font-bold">S</span>
        <svg viewBox="0 0 10 10" className="ml-[3px] size-[10px]" aria-hidden="true"><circle cx="3" cy="3" r="3" fill="#d8352b" /><circle cx="7" cy="7" r="3" fill="#318f43" /><path d="M2 2l5 6 2-4" stroke="#fff" fill="none" /></svg>
        <svg viewBox="0 0 10 10" className="ml-[2px] size-[9px]" aria-hidden="true"><path d="M0 3h2l3-3v10L2 7H0z" fill="#eee" /><path d="M6 3q2 2 0 4M8 1q3 4 0 8" stroke="#ddd" fill="none" /></svg>
        <svg viewBox="0 0 10 10" className="ml-[1px] size-[9px]" fill="none" stroke="#eee" aria-hidden="true"><path d="M2 2h7v5H2zM4 9h5M0 0h3v3" /></svg>
        <svg viewBox="0 0 12 12" className="size-[11px]" aria-hidden="true"><path d="M6 1c7 0 7 10 0 10S-1 1 6 1" fill="#d7dd2c" stroke="#748f1e" /><path d="M6 3v6M3 6h6" stroke="#28731c" strokeWidth="2" /></svg>
        <time className="ml-[2px] w-[40px] text-center leading-[10px]">8:27<br />2019/1/23</time>
      </div>
    </nav>
  );
}

const edge = "pointer-events-none absolute";

function StampEdge() {
  return (
    <>
      <svg className={edge + " inset-x-0 top-0 h-[9px] w-full"} aria-hidden="true">
        <defs><pattern id="pt" width="9" height="9" patternUnits="userSpaceOnUse"><path d="M0 0h9v5.500Q7 3.500 6.500 6 4.500 8 2.500 6 2 3.500 0 5.500z" fill="#fff" stroke="#96979b" strokeWidth=".9" /><rect width="9" height="4" fill="#fff" /></pattern></defs>
        <rect width="100%" height="9" fill="url(#pt)" />
      </svg>
      <svg className={edge + " inset-x-0 bottom-0 h-[9px] w-full"} aria-hidden="true">
        <defs><pattern id="pb" width="9" height="9" patternUnits="userSpaceOnUse"><rect y="5" width="9" height="4" fill="#fff" /><circle cx="4.500" cy="4" r="2.700" fill="#fff" /></pattern></defs>
        <rect width="100%" height="9" fill="url(#pb)" />
      </svg>
      <svg className={edge + " inset-y-0 left-0 h-full w-[9px]"} aria-hidden="true">
        <defs><pattern id="pl" width="9" height="9" patternUnits="userSpaceOnUse"><circle cx="4" cy="4.500" r="2.700" fill="#fff" stroke="#a0a1a5" strokeWidth=".9" /><rect width="4" height="9" fill="#fff" /></pattern></defs>
        <rect width="9" height="100%" fill="url(#pl)" />
      </svg>
      <svg className={edge + " inset-y-0 right-0 h-full w-[9px]"} aria-hidden="true">
        <defs><pattern id="pr" width="9" height="9" patternUnits="userSpaceOnUse"><circle cx="4.500" cy="4.500" r="2.700" fill="#fff" stroke="#a0a1a5" strokeWidth=".7" /><rect x="5" width="4" height="9" fill="#fff" /></pattern></defs>
        <rect width="9" height="100%" fill="url(#pr)" />
      </svg>
    </>
  );
}

export default function App() {
  return (
    <div className="relative flex h-screen flex-col overflow-hidden bg-white px-1 pt-1 pb-[5px] font-['Open_Sans','Noto_Sans_CJK_SC',sans-serif]">
      <TitleBar />
      <Ribbon />
      <TabStrip />
      <div className="flex min-h-0 flex-1 bg-black">
        <FeaturePanel />
        <span className="w-[2px] shrink-0 bg-[#55565a]" />
        <Viewport />
      </div>
      <div className="flex h-[9px] shrink-0 items-start border-b border-[#9a9ba0] bg-[#dfe0e5] text-[7px] leading-[8px] text-[#222]">
        <span className="h-[8px] w-[38px] bg-[#a9aaaf] text-center text-[5px] text-[#77787d]">◂ ◂ ▸ ▸</span>
        <button type="button" className="h-[8px] w-[26px]">模型</button>
        <button type="button" className="h-[8px] w-[30px] border-x border-[#44454a] bg-[#9b9ca2]">3D 视图</button>
        <button type="button" className="h-[8px] w-[44px] border-r border-[#44454a] bg-[#9b9ca2] whitespace-nowrap">运动算例1</button>
      </div>
      <footer className="flex h-[11px] shrink-0 items-center bg-[#d7d8dd] text-[7px] text-[#222]">
        <span className="pl-px">SOLIDWORKS Premium 2015 x64 版</span>
        <span className="ml-auto w-[61px]">在编辑 零件</span>
        <span className="w-[97px]">自</span>
      </footer>
      <Taskbar />
      <div className="absolute right-[58px] bottom-[40px] flex h-[12px] w-[35px] items-center justify-center rounded-[2px] bg-[#eef6fc] text-[7px] text-[#39748f]">点我设置</div>
      <div className="absolute right-[4px] bottom-[25px] flex h-[12px] w-[89px] items-center gap-[3px] bg-[#f7f9fc] pl-px text-[9px] text-[#2c86d8]">
        <span className="flex size-[9px] items-center justify-center rounded-[2px] border border-[#e2532f] text-[8px] leading-none font-bold text-[#e2532f]">S</span>
        <span className="leading-none">中</span>
        <svg viewBox="0 0 8 8" className="size-[8px]" aria-hidden="true"><path d="M5 0q4 6-4 7 7 3 7-3Q8 1 5 0" fill="#2c86d8" /></svg>
        <span className="leading-none">°,</span>
        <svg viewBox="0 0 10 8" className="h-[8px] w-[10px]" fill="none" stroke="#2c86d8" aria-hidden="true"><path d="M1 1h8v6H1zM2 3h6M3 5h4" /></svg>
        <svg viewBox="0 0 8 8" className="size-[8px]" fill="#c5c9d0" aria-hidden="true"><circle cx="4" cy="2" r="2" /><path d="M0 8q4-7 8 0z" /></svg>
        <svg viewBox="0 0 10 8" className="h-[8px] w-[9px]" fill="#2c86d8" aria-hidden="true"><path d="M0 1l3-1q2 2 4 0l3 1-1 3H8v4H2V4H1z" /></svg>
        <svg viewBox="0 0 8 8" className="size-[8px]" fill="none" stroke="#2c86d8" strokeWidth="1.600" aria-hidden="true"><path d="M1 7l3-3q0-3 3-3" /><circle cx="5.500" cy="2.500" r="1.500" /></svg>
      </div>
      <StampEdge />
    </div>
  );
}
